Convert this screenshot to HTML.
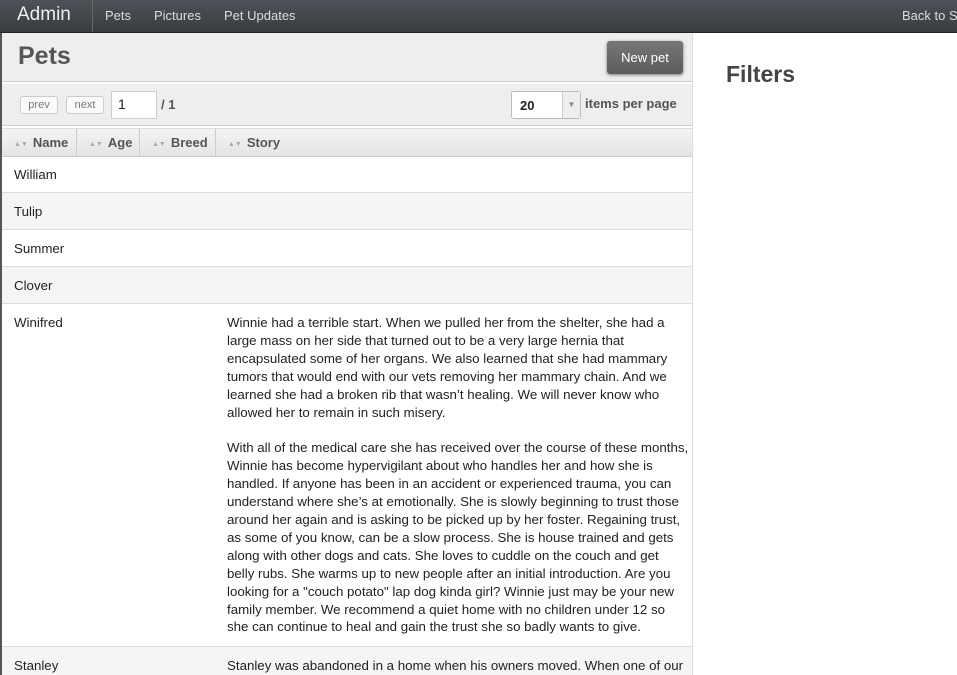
<!DOCTYPE html>
<html><head><style>
*{box-sizing:border-box;margin:0;padding:0}
html,body{overflow:hidden}
body{width:957px;height:675px;font-family:"Liberation Sans",sans-serif;background:#fff;color:#222;position:relative}
.nav{position:absolute;left:0;top:0;width:957px;height:33px;background:linear-gradient(#4c5257,#383d41);border-bottom:1px solid #222;white-space:nowrap;overflow:hidden}
.nav .brand{position:absolute;left:17px;top:4px;font-size:19px;color:#eee}
.nav .sep{position:absolute;left:92px;top:0;width:1px;height:32px;background:#666}
.nav a{position:absolute;top:8px;font-size:13px;color:#ddd}
.left{position:absolute;left:0;top:33px;width:693px;height:642px;border-right:1px solid #ddd;overflow:hidden}
.strip{position:absolute;left:0;top:33px;width:2px;height:642px;background:#555}
.hdr{position:absolute;left:0;top:0;width:693px;height:49px;background:#eee;border-bottom:1px solid #ccc}
.hdr h1{position:absolute;left:18px;top:9px;font-size:25px;color:#555;font-weight:bold}
.btn{position:absolute;left:607px;top:8px;width:76px;height:33px;background:linear-gradient(#777,#5c5c5c);border-radius:3px;color:#fff;font-size:13px;text-align:center;line-height:33px;box-shadow:0 1px 3px rgba(0,0,0,.5)}
.pager{position:absolute;left:0;top:51px;width:693px;height:42px;background:#eee;border-bottom:1px solid #ccc}
.sb{position:absolute;top:12px;height:18px;border:1px solid #ccc;border-radius:3px;background:#fafafa;font-size:11px;color:#777;line-height:16px;text-align:center}
.inp{position:absolute;left:111px;top:7px;width:46px;height:28px;background:#fff;border:1px solid #ccc;font-size:14px;padding:4px 6px}
.sel{position:absolute;left:511px;top:7px;width:70px;height:28px;background:#fff;border:1px solid #bbb;border-radius:3px;font-size:13px;font-weight:bold;padding:6px 8px}
.sel i{position:absolute;right:0;top:0;width:18px;height:26px;background:#eee;border-left:1px solid #ccc;font-style:normal;font-size:8px;color:#888;text-align:center;line-height:26px}
.th{position:absolute;left:0;top:95px;width:693px;height:29px;background:linear-gradient(#f4f4f4,#e4e4e4);border-bottom:1px solid #ccc;border-top:1px solid #ddd}
.th div{position:absolute;top:0;height:28px;border-right:1px solid #ccc;font-size:13px;font-weight:bold;color:#555;line-height:28px;padding-left:14px;white-space:nowrap}
.th span{color:#aaa;font-size:7px;margin-right:5px;vertical-align:1px}
.row{position:absolute;left:0;width:693px;border-bottom:1px solid #ddd;font-size:13.3px;line-height:17.9px;padding-top:10px}
.row.s{background:#f5f5f5}
.row .n{position:absolute;left:14px;top:10px}
.row .st{margin-left:227px;width:466px;white-space:nowrap}
.filters{position:absolute;left:726px;top:61px;font-size:23px;font-weight:bold;color:#444}
</style></head><body>
<div class="nav"><div class="brand">Admin</div><div class="sep"></div>
<a style="left:105px">Pets</a><a style="left:154px">Pictures</a><a style="left:224px">Pet Updates</a><a style="left:902px">Back to S</a></div>
<div class="left">
<div class="hdr"><h1>Pets</h1><div class="btn">New pet</div></div>
<div class="pager"><div class="sb" style="left:20px;width:38px">prev</div><div class="sb" style="left:66px;width:38px">next</div><div class="inp">1</div>
<div style="position:absolute;left:161px;top:13px;font-size:13px;color:#555;font-weight:bold">/ 1</div>
<div class="sel">20<i>▼</i></div>
<div style="position:absolute;left:585px;top:12px;font-size:13px;color:#555;font-weight:bold">items per page</div></div>
<div class="th"><div style="left:0;width:77px"><span>▲▼</span>Name</div><div style="left:77px;width:63px;padding-left:12px"><span>▲▼</span>Age</div><div style="left:140px;width:76px;padding-left:12px"><span>▲▼</span>Breed</div><div style="left:216px;width:477px;border:none;padding-left:12px"><span>▲▼</span>Story</div></div>
<div class="row" style="top:123px;height:37px"><div class="n">William</div></div>
<div class="row s" style="top:160px;height:37px"><div class="n">Tulip</div></div>
<div class="row" style="top:197px;height:37px"><div class="n">Summer</div></div>
<div class="row s" style="top:234px;height:37px"><div class="n">Clover</div></div>
<div class="row" style="top:271px;height:343px"><div class="n">Winifred</div><div class="st">Winnie had a terrible start. When we pulled her from the shelter, she had a<br>large mass on her side that turned out to be a very large hernia that<br>encapsulated some of her organs. We also learned that she had mammary<br>tumors that would end with our vets removing her mammary chain. And we<br>learned she had a broken rib that wasn’t healing. We will never know who<br>allowed her to remain in such misery.<br><br>With all of the medical care she has received over the course of these months,<br>Winnie has become hypervigilant about who handles her and how she is<br>handled. If anyone has been in an accident or experienced trauma, you can<br>understand where she’s at emotionally. She is slowly beginning to trust those<br>around her again and is asking to be picked up by her foster. Regaining trust,<br>as some of you know, can be a slow process. She is house trained and gets<br>along with other dogs and cats. She loves to cuddle on the couch and get<br>belly rubs. She warms up to new people after an initial introduction. Are you<br>looking for a "couch potato" lap dog kinda girl? Winnie just may be your new<br>family member. We recommend a quiet home with no children under 12 so<br>she can continue to heal and gain the trust she so badly wants to give.</div></div>
<div class="row s" style="top:614px;height:60px"><div class="n">Stanley</div><div class="st">Stanley was abandoned in a home when his owners moved. When one of our</div></div>
</div>
<div class="strip"></div>
<div class="filters">Filters</div>
</body></html>
